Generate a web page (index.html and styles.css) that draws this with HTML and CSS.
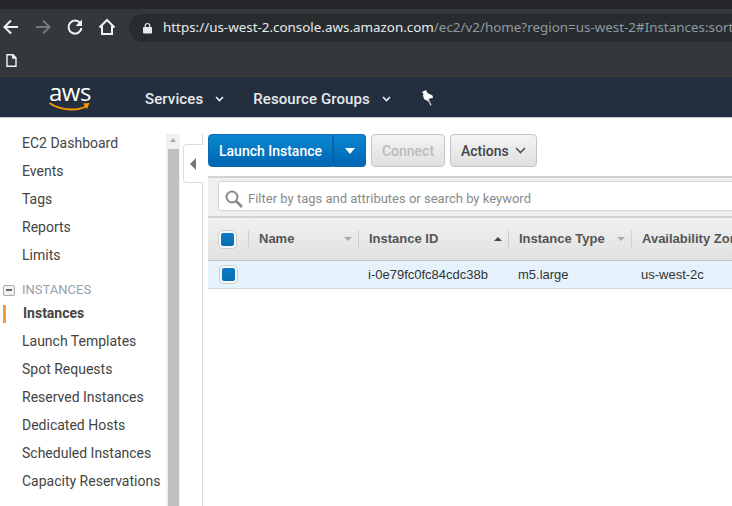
FILE: index.html
```html
<!DOCTYPE html>
<html>
    <head>
        <title>Instances | EC2 Management Console</title>
        <meta name='viewport' content='width=device-width, initial-scale=1.0'>
        <link rel="stylesheet" href="styles.css">
    </head>
    <body>
        <div class='tabstrip'></div>
        <div class='toolbar'>
            <svg class='tool' width='20' height='20' viewBox='0 0 20 20'><path d='M17 10H4M10 3.500L3.500 10l6.500 6.500' fill='none' stroke='#f1f3f4' stroke-width='2'/></svg>
            <svg class='tool' width='20' height='20' viewBox='0 0 20 20'><path d='M3 10h13M10 3.500l6.500 6.500-6.500 6.500' fill='none' stroke='#75787b' stroke-width='2'/></svg>
            <svg class='tool' width='20' height='20' viewBox='0 0 20 20'><path d='M15.500 6.500A6.500 6.500 0 1 0 16.500 11' fill='none' stroke='#f1f3f4' stroke-width='2'/><path d='M17 2.500V9h-6.500z' fill='#f1f3f4'/></svg>
            <svg class='tool' width='20' height='20' viewBox='0 0 20 20'><path d='M2.500 10.500L10 3l7.500 7.500M5 9v8h10V9' fill='none' stroke='#f1f3f4' stroke-width='2'/></svg>
            <div class='omnibox'>
                <svg class='lock' width='9' height='12' viewBox='0 0 10 12'><path d='M1 5h8a1 1 0 0 1 1 1v5a1 1 0 0 1-1 1H1a1 1 0 0 1-1-1V6a1 1 0 0 1 1-1z' fill='#e8eaed'/><path d='M2.500 5V3.500a2.500 2.500 0 0 1 5 0V5' fill='none' stroke='#e8eaed' stroke-width='1.300'/></svg>
                <span class='url'><span class='url-host'>https://us-west-2.console.aws.amazon.com</span>/ec2/v2/home?region=us-west-2#Instances:sort</span>
            </div>
        </div>
        <div class='bookmarks'>
            <svg width='11' height='13' viewBox='0 0 11 13'><path d='M1 .7h6l3 3v8.600H1z' fill='none' stroke='#f1f3f4' stroke-width='1.400'/><path d='M6.500 1v3.200H10' fill='#f1f3f4' stroke='#f1f3f4'/></svg>
        </div>

        <nav class='awsbar'>
            <div class='logo'>
                <span class='logo-text'>aws</span>
                <svg class='logo-smile' width='42' height='10' viewBox='0 0 42 10'><path d='M.5 1C11 8.500 28 9.500 38 4' fill='none' stroke='#f90' stroke-width='1.800'/><path d='M34 1.500l6.500-.5-2.500 6z' fill='#f90'/></svg>
            </div>
            <a class='navitem services'>Services <svg width='9' height='6' viewBox='0 0 9 6'><path d='M1 1l3.500 3.500L8 1' fill='none' stroke='#e6e9ec' stroke-width='1.700'/></svg></a>
            <a class='navitem groups'>Resource Groups <svg width='9' height='6' viewBox='0 0 9 6'><path d='M1 1l3.500 3.500L8 1' fill='none' stroke='#e6e9ec' stroke-width='1.700'/></svg></a>
            <svg class='pin' width='14' height='16' viewBox='0 0 14 16'><path d='M2 2L6 0 7.500 3l5 2.500L13 8 9.500 8.500 8.500 11.500 4 9 3 5.500 3.500 4z' fill='#fff'/><path d='M8 9L11 15.500' stroke='#c9ced3' stroke-width='1.400'/></svg>
        </nav>

        <div class='console'>
            <aside class='sidebar'>
                <ul class='menu'>
                    <li>EC2 Dashboard</li>
                    <li>Events</li>
                    <li>Tags</li>
                    <li>Reports</li>
                    <li>Limits</li>
                </ul>
                <div class='group'><span class='collapse'></span>INSTANCES</div>
                <ul class='menu'>
                    <li class='active'>Instances</li>
                    <li>Launch Templates</li>
                    <li>Spot Requests</li>
                    <li>Reserved Instances</li>
                    <li>Dedicated Hosts</li>
                    <li>Scheduled Instances</li>
                    <li>Capacity Reservations</li>
                </ul>
            </aside>
            <div class='scrollbar'>
                <div class='scroll-up'></div>
                <div class='scroll-thumb'></div>
            </div>
            <div class='rail'>
                <div class='rail-tab'><span class='rail-arrow'></span></div>
            </div>
            <main class='content'>
                <div class='actions'>
                    <div class='btn-split'>
                        <button class='btn-primary'>Launch Instance</button>
                        <button class='btn-primary btn-caret'><span class='caret-white'></span></button>
                    </div>
                    <button class='btn btn-off'>Connect</button>
                    <button class='btn'>Actions <svg width='11' height='7' viewBox='0 0 11 7'><path d='M1 1l4.500 4.500L10 1' fill='none' stroke='#555' stroke-width='1.600'/></svg></button>
                </div>
                <div class='panel'>
                    <div class='searchwrap'>
                        <div class='search'>
                            <svg width='18' height='18' viewBox='0 0 18 18'><circle cx='7' cy='7' r='5.500' fill='none' stroke='#888' stroke-width='2'/><path d='M11 11l6 6' stroke='#888' stroke-width='2.600'/></svg>
                            <span>Filter by tags and attributes or search by keyword</span>
                        </div>
                    </div>
                    <div class='thead'>
                        <div class='th th-check'><span class='check'></span></div>
                        <div class='th th-name'><b>Name</b><span class='sort'></span></div>
                        <div class='th th-id'><b>Instance ID</b><span class='sort sort-up'></span></div>
                        <div class='th th-type'><b>Instance Type</b><span class='sort'></span></div>
                        <div class='th th-zone'><b>Availability Zone</b></div>
                    </div>
                    <div class='trow'>
                        <div class='td th-check'><span class='check'></span></div>
                        <div class='td th-name'></div>
                        <div class='td th-id'>i-0e79fc0fc84cdc38b</div>
                        <div class='td th-type'>m5.large</div>
                        <div class='td th-zone'>us-west-2c</div>
                    </div>
                </div>
            </main>
        </div>
    </body>
</html>
```

FILE: styles.css
```css
* {
    margin: 0px;
    padding: 0px;
    box-sizing: border-box;
}
html, body {
    height: 506px;
    overflow: hidden;
}
body {
    width: 732px;
    background: #fff;
    font-family: "Liberation Sans", sans-serif;
}

/* browser chrome */
.tabstrip {
    height: 9px;
    background: #25272a;
}
.toolbar {
    height: 33px;
    background: #35383b;
    display: flex;
    align-items: center;
    padding: 5px 0 0 1px;
}
.tool {
    margin: -2px 12px 0 0;
    flex: none;
}
.omnibox {
    flex: none;
    width: 603px;
    height: 28px;
    padding-left: 14px;
    background: #292c2f;
    border-radius: 14px 0 0 14px;
    display: flex;
    align-items: center;
    gap: 11px;
    white-space: nowrap;
    overflow: hidden;
}
.lock {
    flex: none;
}
.url {
    font-family: "Noto Sans", sans-serif;
    font-size: 13.400px;
    color: #8c9aa3;
    margin-top: -2px;
}
.url-host {
    color: #e8eaed;
}
.bookmarks {
    height: 36px;
    background: #35383b;
    border-bottom: 1px solid #2a2d30;
    padding: 11px 0 0 6px;
}

/* aws nav */
.awsbar {
    height: 40px;
    padding-top: 2px;
    background: #232f3e;
    border-bottom: 1px solid #c8cbcd;
    display: flex;
    align-items: center;
    color: #e6e9ec;
    font-family: Roboto, sans-serif;
    font-size: 15px;
    font-weight: 500;
    letter-spacing: 0.100px;
}
.logo {
    width: 145px;
    padding-left: 49px;
    flex: none;
    height: 37px;
}
.logo-text {
    display: block;
    font-family: "Open Sans", sans-serif;
    font-size: 24px;
    line-height: 24px;
    color: #fff;
    letter-spacing: -0.500px;
}
.logo-smile {
    display: block;
    margin-top: -2px;
}
.navitem {
    display: flex;
    align-items: center;
    gap: 12px;
    white-space: nowrap;
}
.services {
    margin-right: 29px;
}
.pin {
    margin-left: 29px;
    margin-top: -2px;
}

/* console body */
.console {
    display: flex;
    height: 388px;
    overflow: hidden;
}
.sidebar {
    width: 166px;
    flex: none;
    padding-top: 11px;
    font-family: Roboto, sans-serif;
    font-size: 14px;
    color: #444;
}
.menu {
    list-style: none;
}
.menu li {
    height: 28px;
    line-height: 28px;
    padding-left: 22px;
    white-space: nowrap;
}
.menu li.active {
    font-weight: 700;
    padding-left: 23px;
    position: relative;
}
.menu li.active:before {
    content: '';
    position: absolute;
    left: 3px;
    top: 6px;
    width: 3px;
    height: 18px;
    background: #f7993b;
}
.group {
    height: 20px;
    margin-top: 11px;
    margin-bottom: -1px;
    line-height: 20px;
    font-size: 13px;
    color: #98a0a8;
    padding-left: 3px;
    display: flex;
    align-items: center;
}
.collapse {
    width: 12px;
    height: 11px;
    border: 1px solid #aaa;
    border-radius: 2px;
    background: linear-gradient(#666, #666) center / 6px 2px no-repeat #f2f2f2;
    margin-right: 7px;
}
.scrollbar {
    width: 14px;
    flex: none;
    margin-top: 16px;
    background: #f1f1f1;
    padding: 0 1px 0 2px;
}
.scroll-up {
    height: 15px;
    position: relative;
}
.scroll-up:after {
    content: '';
    position: absolute;
    left: 2px;
    top: 4px;
    border-left: 3.500px solid transparent;
    border-right: 3.500px solid transparent;
    border-bottom: 4px solid #aaa;
}
.scroll-thumb {
    height: 400px;
    background: #bfbfbf;
}
.rail {
    width: 28px;
    flex: none;
    padding: 26px 0 0 3px;
    position: relative;
}
.rail:after {
    content: '';
    position: absolute;
    left: 22px;
    top: 16px;
    bottom: 0;
    width: 1px;
    background: #dcdcdc;
}
.rail-tab {
    width: 20px;
    height: 39px;
    background: #fff;
    border: 1px solid #dcdcdc;
    border-right: 0;
    border-radius: 4px 0 0 4px;
    position: relative;
    z-index: 1;
    display: flex;
    align-items: center;
    padding-left: 6px;
}
.rail-arrow {
    border-top: 6px solid transparent;
    border-bottom: 6px solid transparent;
    border-right: 6px solid #777;
}
.content {
    width: 524px;
    flex: none;
    padding-top: 16px;
}

/* buttons */
.actions {
    display: flex;
    height: 33px;
    margin-bottom: 9px;
    white-space: nowrap;
}
.btn-split {
    display: flex;
    margin-right: 5px;
}
button {
    font-family: Roboto, sans-serif;
    font-size: 14px;
    font-weight: 500;
}
.btn-primary {
    height: 33px;
    width: 125px;
    color: #fff;
    background: linear-gradient(#0a87d0, #0066b4);
    border: 1px solid #0a69b0;
    border-radius: 4px 0 0 4px;
}
.btn-caret {
    width: 33px;
    border-radius: 0 4px 4px 0;
    border-left: 1px solid #0a5a9c;
    display: flex;
    align-items: center;
    justify-content: center;
}
.caret-white {
    border-left: 5.500px solid transparent;
    border-right: 5.500px solid transparent;
    border-top: 6px solid #fff;
}
.btn {
    height: 33px;
    padding: 0 10px;
    margin-right: 5px;
    color: #444;
    background: linear-gradient(#f4f4f4, #e0e0e0);
    border: 1px solid #c4c4c4;
    border-radius: 4px;
    display: flex;
    align-items: center;
    gap: 6px;
}
.btn-off {
    color: #bbb;
    width: 74px;
    justify-content: center;
    padding: 0;
}

/* filter + table */
.panel {
    width: 700px;
    background: #e9e9e9;
    border-top: 2px solid #d3d3d3;
}
.searchwrap {
    height: 40px;
    padding: 3px 0 0 10px;
    border-bottom: 2px solid #d3d3d3;
    background: #efefef;
}
.search {
    height: 30px;
    background: #fff;
    border: 1px solid #d5d5d5;
    border-radius: 3px 0 0 3px;
    display: flex;
    align-items: center;
    gap: 5px;
    padding: 5px 0 0 6px;
    font-family: Roboto, sans-serif;
    font-size: 13px;
    color: #8a8a8a;
}
.thead {
    display: flex;
    height: 43px;
    background: linear-gradient(#f1f1f1, #e1e1e1);
    border-bottom: 1px solid #c5c5c5;
    font-size: 13px;
    color: #555;
}
.thead b {
    margin-top: -2px;
}
.th {
    position: relative;
    display: flex;
    align-items: center;
    padding-left: 10px;
}
.th:after {
    content: '';
    position: absolute;
    right: 0;
    top: 12px;
    height: 18px;
    width: 1px;
    background: #d0d0d0;
}
.th-zone:after {
    display: none;
}
.th-check {
    width: 41px;
}
.th-name {
    width: 110px;
}
.th-id {
    width: 150px;
}
.th-type {
    width: 123px;
}
.th-zone {
    width: 200px;
    white-space: nowrap;
}
.check {
    width: 19px;
    height: 19px;
    padding: 2px;
    display: flex;
    border-radius: 5px;
    border: 1px solid #cfcfcf;
    background: #f7f7f7;
}
.check:before {
    content: '';
    flex: 1;
    border-radius: 2px;
    background: linear-gradient(#0a7cc4, #0a6cb5);
}
.sort {
    position: absolute;
    right: 7px;
    top: 19px;
    border-left: 4px solid transparent;
    border-right: 4px solid transparent;
    border-top: 4px solid #aaa;
}
.sort-up {
    border-top: 0;
    border-bottom: 4px solid #444;
}
.trow {
    display: flex;
    height: 28px;
    background: #e5f1fb;
    border-bottom: 1px solid #d6d6d6;
    font-size: 13px;
    color: #333;
    white-space: nowrap;
}
.td {
    display: flex;
    align-items: center;
    padding-left: 9px;
}
.td.th-check {
    padding-left: 11px;
}
```
